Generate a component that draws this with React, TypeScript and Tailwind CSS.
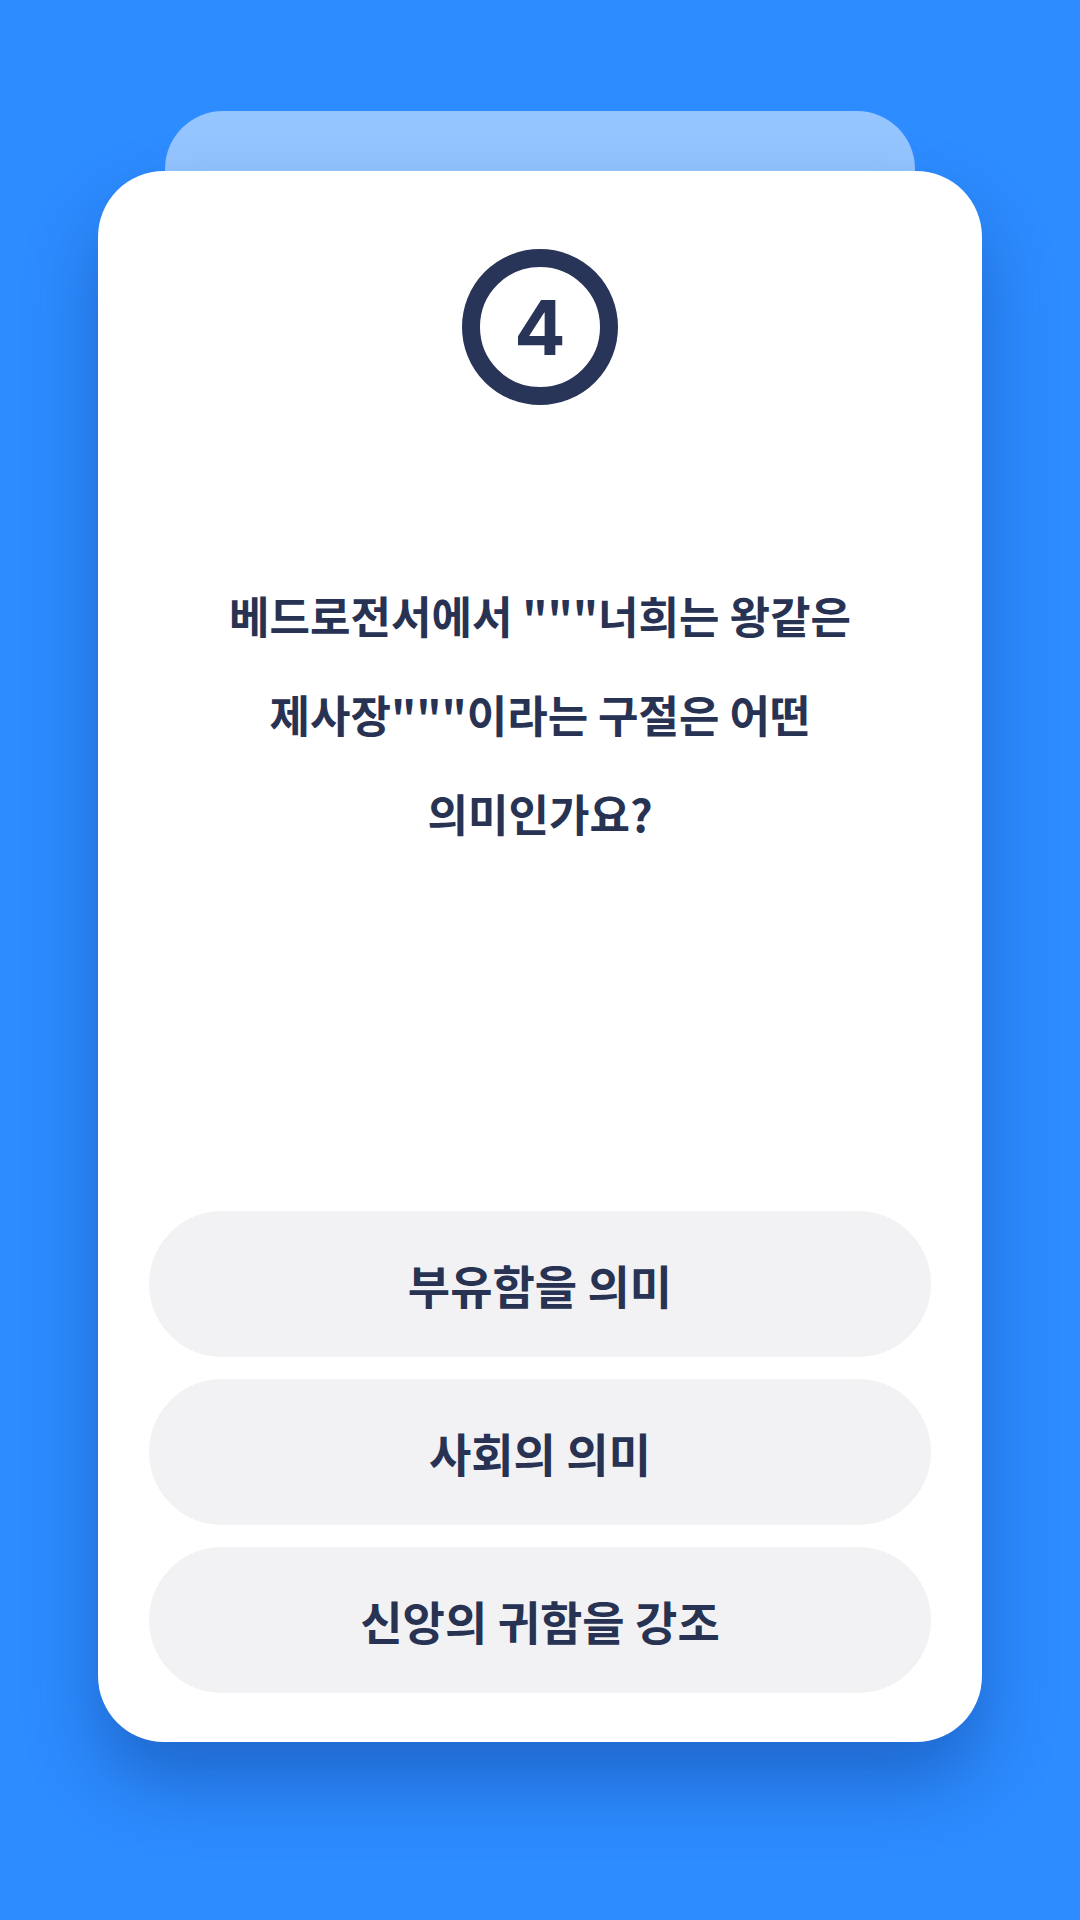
const options = ["부유함을 의미", "사회의 의미", "신앙의 귀함을 강조"];

export default function App() {
  return (
    <div
      className="min-h-[1920px] bg-[#2d8cff] flex flex-col pt-[111px] px-[98px]"
      style={{ fontFamily: '"Noto Sans CJK KR", "Noto Sans", sans-serif' }}
    >
      <div className="mx-[67px] h-[60px] rounded-t-[58px] bg-[#95c5ff]" />
      <div className="h-[1571px] rounded-[66px] bg-white flex flex-col items-center pt-[78px] pb-[49px] px-[51px] shadow-[0_40px_70px_rgba(10,50,130,0.4)]">
        <div className="w-[156px] h-[156px] rounded-full border-[18px] border-[#283458] flex items-center justify-center">
          <span
            className="text-[76px] font-bold leading-none text-[#283458]"
            style={{ fontFamily: 'Inter, "Liberation Sans", sans-serif' }}
          >
            4
          </span>
        </div>
        <p className="mt-[161px] max-w-[720px] text-center text-[44px] leading-[99px] font-bold text-[#283353] break-keep">
          베드로전서에서 """너희는 왕같은 제사장"""이라는 구절은 어떤 의미인가요?
        </p>
        <div className="mt-auto w-full flex flex-col gap-[22px]">
          {options.map((opt) => (
            <button
              key={opt}
              className="h-[146px] w-full rounded-full bg-[#f2f2f4] flex items-center justify-center text-[46px] font-bold text-[#283353]"
            >
              {opt}
            </button>
          ))}
        </div>
      </div>
    </div>
  );
}
